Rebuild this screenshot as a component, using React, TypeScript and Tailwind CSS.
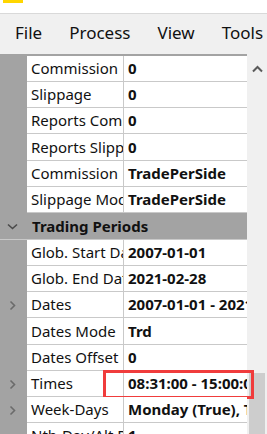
import React from 'react'

interface GridRow {
  label: string
  value: string
  h: string
  expandable?: boolean
  header?: boolean
  marked?: boolean
}

const rows: GridRow[] = [
  { label: 'Commission', value: '0', h: 'h-[26px]' },
  { label: 'Slippage', value: '0', h: 'h-[26px]' },
  { label: 'Reports Commission', value: '0', h: 'h-[26px]' },
  { label: 'Reports Slippage', value: '0', h: 'h-[27px]' },
  { label: 'Commission', value: 'TradePerSide', h: 'h-[26px]' },
  { label: 'Slippage Mode', value: 'TradePerSide', h: 'h-[26px]' },
  { label: 'Trading Periods', value: '', h: 'h-[27px]', header: true },
  { label: 'Glob. Start Date', value: '2007-01-01', h: 'h-[26px]' },
  { label: 'Glob. End Date', value: '2021-02-28', h: 'h-[26px]' },
  { label: 'Dates', value: '2007-01-01 - 2021-02-28', h: 'h-[26px]', expandable: true },
  { label: 'Dates Mode', value: 'Trd', h: 'h-[27px]' },
  { label: 'Dates Offset', value: '0', h: 'h-[26px]' },
  { label: 'Times', value: '08:31:00 - 15:00:00', h: 'h-[26px]', expandable: true, marked: true },
  { label: 'Week-Days', value: 'Monday (True), Tuesday (True)', h: 'h-[26px]', expandable: true },
  { label: 'Nth-Day/Alt Days', value: '1', h: 'h-[26px]' }
]

function ChevronRight() {
  return (
    <svg width="7" height="11" viewBox="0 0 7 11" className="ml-[9px]">
      <polyline points="1.5,1.5 5.5,5.5 1.5,9.5" fill="none" stroke="#6b6b6b" strokeWidth="1.6" />
    </svg>
  )
}

function ChevronDown() {
  return (
    <svg width="11" height="7" viewBox="0 0 11 7" className="ml-[7px]">
      <polyline points="1,1.5 5.5,5.5 10,1.5" fill="none" stroke="#4a4a4a" strokeWidth="1.6" />
    </svg>
  )
}

export default function App() {
  return (
    <div className="w-[267px] h-[434px] overflow-hidden bg-white font-['Noto_Sans',sans-serif] text-[#111]">
      {/* Title bar remnant */}
      <div className="h-[13px] bg-white pl-[3px]">
        <div className="w-[20px] h-[3px] bg-[#ffd600]"></div>
      </div>

      {/* Menu */}
      <div className="h-[41px] border-t border-[#d9d9d9] bg-[#f0f0f0] flex items-start pt-[6px] pl-[15px] gap-[27px] text-[17px] whitespace-nowrap">
        <span>File</span>
        <span>Process</span>
        <span>View</span>
        <span>Tools</span>
      </div>

      <div className="flex">
        {/* Property grid */}
        <div className="w-[247px] shrink-0 border-t-[2px] border-[#a3a3a3]">
          {rows.map((row, i) =>
            row.header ? (
              <div key={i} className={`${row.h} flex items-center bg-[#a3a3a3] border-b border-[#c9c9c9]`}>
                <div className="w-[27px] shrink-0 flex items-center">
                  <ChevronDown />
                </div>
                <span className="pl-[5px] text-[15px] font-bold whitespace-nowrap">{row.label}</span>
              </div>
            ) : (
              <div key={i} className={`${row.h} flex relative`}>
                <div className="w-[27px] shrink-0 bg-[#a3a3a3] flex items-center">
                  {row.expandable && <ChevronRight />}
                </div>
                <div className="w-[97px] shrink-0 border-r border-b border-[#c9c9c9] bg-white overflow-hidden flex items-center pl-[4px]">
                  <span className="text-[15px] whitespace-nowrap">{row.label}</span>
                </div>
                <div className="flex-1 min-w-0 border-b border-[#c9c9c9] bg-white overflow-hidden flex items-center pl-[4px]">
                  <span className="text-[15px] font-bold whitespace-nowrap">{row.value}</span>
                </div>
                {row.marked && (
                  <div className="absolute left-[103px] -top-[1px] w-[151px] h-[29px] border-[3px] border-[#f03c3c]"></div>
                )}
              </div>
            )
          )}
        </div>

        {/* Scrollbar */}
        <div className="w-[20px] shrink-0 bg-[#f0f0f0] h-[380px] flex flex-col">
          <div className="h-[319px] flex justify-center pt-[11px]">
            <svg width="11" height="8" viewBox="0 0 11 8" className="ml-[1px]">
              <polyline points="1,6.5 5.5,2 10,6.5" fill="none" stroke="#5a5a5a" strokeWidth="2" />
            </svg>
          </div>
          <div className="flex-1 mx-[2px] bg-[#cdcdcd]"></div>
        </div>
      </div>
    </div>
  )
}
